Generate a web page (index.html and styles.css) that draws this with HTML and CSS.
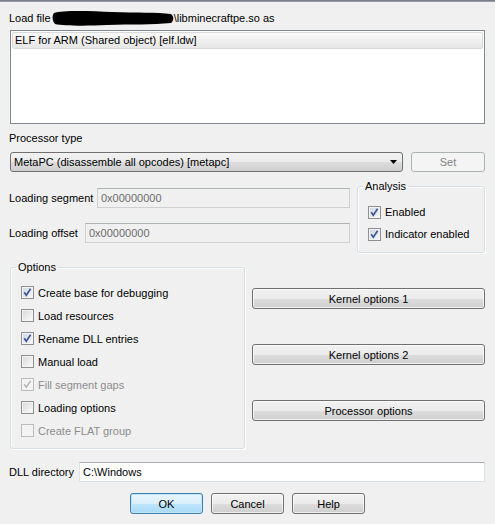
FILE: index.html
```html
<!DOCTYPE html>
<html lang="en">
<head>
<meta charset="UTF-8">
<title>Load a new file</title>
<link rel="stylesheet" href="styles.css">
</head>
<body>
<div class="frame-top"></div>
<div class="dialog">
  <div class="load-line">Load file <svg class="redact" width="122" height="16" viewBox="0 0 122 16"><path d="M2 3 C10 0 40 1 60 2 C85 3 105 2 119 4 C122 6 122 11 119 13 C100 15 80 14 55 15 C35 16 12 16 3 14 C0 11 0 5 2 3 Z" fill="#000"/></svg>\libminecraftpe.so as</div>
  <div class="listbox">
    <div class="list-item">ELF for ARM (Shared object) [elf.ldw]</div>
  </div>
  <div class="caption">Processor type</div>
  <div class="proc-row">
    <div class="combo">MetaPC (disassemble all opcodes) [metapc]<svg class="arrow" width="7" height="4" viewBox="0 0 7 4"><path d="M0 0 H7 L3.5 4 Z" fill="#000"/></svg></div>
    <button class="btn btn-set" disabled>Set</button>
  </div>
  <div class="mid">
    <div class="loading">
      <div class="field-row seg"><span class="field-label">Loading segment</span><div class="textbox disabled">0x00000000</div></div>
      <div class="field-row off"><span class="field-label">Loading offset</span><div class="textbox disabled">0x00000000</div></div>
    </div>
    <fieldset class="group analysis">
      <legend>Analysis</legend>
      <div class="check-row"><span class="cb checked"><svg width="11" height="11" viewBox="0 0 11 11"><path d="M2.2 5.2 L4.3 8.2 L8.6 1.8" fill="none" stroke="#3d5692" stroke-width="1.7"/></svg></span>Enabled</div>
      <div class="check-row"><span class="cb checked"><svg width="11" height="11" viewBox="0 0 11 11"><path d="M2.2 5.2 L4.3 8.2 L8.6 1.8" fill="none" stroke="#3d5692" stroke-width="1.7"/></svg></span>Indicator enabled</div>
    </fieldset>
  </div>
  <div class="options-row">
    <fieldset class="group options">
      <legend>Options</legend>
      <div class="check-row"><span class="cb checked"><svg width="11" height="11" viewBox="0 0 11 11"><path d="M2.2 5.2 L4.3 8.2 L8.6 1.8" fill="none" stroke="#3d5692" stroke-width="1.7"/></svg></span>Create base for debugging</div>
      <div class="check-row"><span class="cb"></span>Load resources</div>
      <div class="check-row"><span class="cb checked"><svg width="11" height="11" viewBox="0 0 11 11"><path d="M2.2 5.2 L4.3 8.2 L8.6 1.8" fill="none" stroke="#3d5692" stroke-width="1.7"/></svg></span>Rename DLL entries</div>
      <div class="check-row"><span class="cb"></span>Manual load</div>
      <div class="check-row disabled"><span class="cb checked"><svg width="11" height="11" viewBox="0 0 11 11"><path d="M2.2 5.2 L4.3 8.2 L8.6 1.8" fill="none" stroke="#b4b4b4" stroke-width="1.5"/></svg></span>Fill segment gaps</div>
      <div class="check-row"><span class="cb"></span>Loading options</div>
      <div class="check-row disabled"><span class="cb"></span>Create FLAT group</div>
    </fieldset>
    <div class="side-buttons">
      <button class="btn">Kernel options 1</button>
      <button class="btn">Kernel options 2</button>
      <button class="btn">Processor options</button>
    </div>
  </div>
  <div class="field-row dll"><span class="field-label">DLL directory</span><div class="textbox">C:\Windows</div></div>
  <div class="footer">
    <button class="btn btn-default">OK</button>
    <button class="btn">Cancel</button>
    <button class="btn">Help</button>
  </div>
</div>
</body>
</html>
```

FILE: styles.css
```css
body {
  margin: 0;
  background-color: #f0f0f0;
  font-family: "Liberation Sans", Arial, sans-serif;
  font-size: 11px;
  color: #000;
  width: 495px;
  height: 524px;
  overflow: hidden;
}
.frame-top {
  height: 2px;
  background: linear-gradient(#6c737c, #a3a9b0);
}
.dialog {
  padding: 0 10px;
}
.load-line {
  margin-top: 9px;
  height: 14px;
  line-height: 14px;
  display: flex;
  align-items: center;
  white-space: pre;
  margin-left: -1px;
}
.redact {
  margin: 0 0 0 -2px;
  flex: none;
}
.listbox {
  margin-top: 5px;
  height: 94px;
  box-sizing: border-box;
  border: 1px solid #828790;
  background: #fff;
  padding: 1px;
}
.list-item {
  height: 17px;
  box-sizing: border-box;
  border: 1px solid #d9d9d9;
  border-radius: 2px;
  background: linear-gradient(#fafafa, #e6e6e6);
  padding-left: 2px;
  line-height: 15px;
}
.caption {
  margin-top: 7px;
  height: 14px;
  line-height: 14px;
  margin-left: -1px;
}
.proc-row {
  margin-top: 7px;
  display: flex;
  gap: 8px;
  height: 20px;
}
.combo {
  flex: 1;
  position: relative;
  box-sizing: border-box;
  border: 1px solid #707070;
  border-radius: 3px;
  background: linear-gradient(#f2f2f2 0%, #ebebeb 50%, #dddddd 51%, #cfcfcf 100%);
  padding-left: 3px;
  line-height: 18px;
  display: flex;
  align-items: center;
}
.arrow {
  margin-left: auto;
  margin-right: 5px;
}
.btn {
  font: inherit;
  color: #000;
  box-sizing: border-box;
  height: 21px;
  border: 1px solid #707070;
  border-radius: 3px;
  background: linear-gradient(#f2f2f2 0%, #ebebeb 50%, #dddddd 51%, #cfcfcf 100%);
  box-shadow: inset 0 0 0 1px rgba(255,255,255,0.7);
  padding: 0;
}
.btn-set {
  width: 74px;
  height: 20px;
  border-color: #adb2b5;
  background: #f4f4f4;
  color: #838383;
  box-shadow: none;
}
.mid {
  display: flex;
  gap: 7px;
}
.loading {
  width: 340px;
  display: flex;
  flex-direction: column;
}
.field-row {
  display: flex;
  align-items: center;
  height: 20px;
}
.field-label {
  flex: none;
  margin-left: -1px;
}
.seg { margin-top: 16px; }
.seg .field-label { width: 88px; }
.off { margin-top: 15px; }
.off .field-label { width: 76px; }
.textbox {
  flex: 1;
  height: 20px;
  box-sizing: border-box;
  border: 1px solid #dbdfe6;
  border-top-color: #abadb3;
  border-left-color: #e2e3ea;
  background: #fff;
  padding-left: 3px;
  line-height: 18px;
}
.textbox.disabled {
  background: #f0f0f0;
  border-color: #d0d0d0;
  border-top-color: #adb2b5;
  color: #6d6d6d;
}
.group {
  margin: 0;
  min-width: 0;
  border: 1px solid #d5dfe5;
  border-radius: 3px;
  box-shadow: inset 1px 1px 0 #fff, 1px 1px 0 #fff;
}
.group legend {
  padding: 0 2px;
  margin-left: -5px;
  line-height: 14px;
}
.analysis {
  margin-top: 7px;
  width: 128px;
  box-sizing: border-box;
  padding: 8px 0 7px 10px;
}
.analysis .check-row {
  height: 22px;
}
.check-row {
  display: flex;
  align-items: center;
  height: 23px;
  gap: 4px;
  white-space: nowrap;
}
.check-row.disabled {
  color: #8d8d8d;
}
.cb {
  flex: none;
  width: 13px;
  height: 13px;
  box-sizing: border-box;
  border: 1px solid #8e8f8f;
  background: linear-gradient(135deg, #d8d8d8, #fbfbfb);
  box-shadow: inset 0 0 0 1px #f4f4f4;
  display: flex;
  align-items: center;
  justify-content: center;
}
.cb.checked {
  background: linear-gradient(135deg, #cfd6e4, #f6f8fb);
}
.check-row.disabled .cb {
  border-color: #bcbcbc;
  background: #f4f4f4;
}
.options-row {
  display: flex;
  gap: 7px;
  margin-top: 7px;
}
.options {
  width: 235px;
  box-sizing: border-box;
  padding: 7px 0 6px 10px;
}
.side-buttons {
  width: 233px;
  padding-top: 28px;
  display: flex;
  flex-direction: column;
  gap: 35px;
}
.dll {
  margin-top: 13px;
}
.dll .field-label { width: 70px; }
.footer {
  margin-top: 11px;
  display: flex;
  justify-content: center;
  gap: 8px;
}
.footer .btn {
  width: 73px;
}
.btn-default {
  border-color: #3c7fb1;
  background: linear-gradient(#eaf6fd 0%, #d9f0fc 50%, #bee6fd 51%, #a7d9f5 100%);
  box-shadow: inset 0 0 0 1px #c3e4f5;
}
```
